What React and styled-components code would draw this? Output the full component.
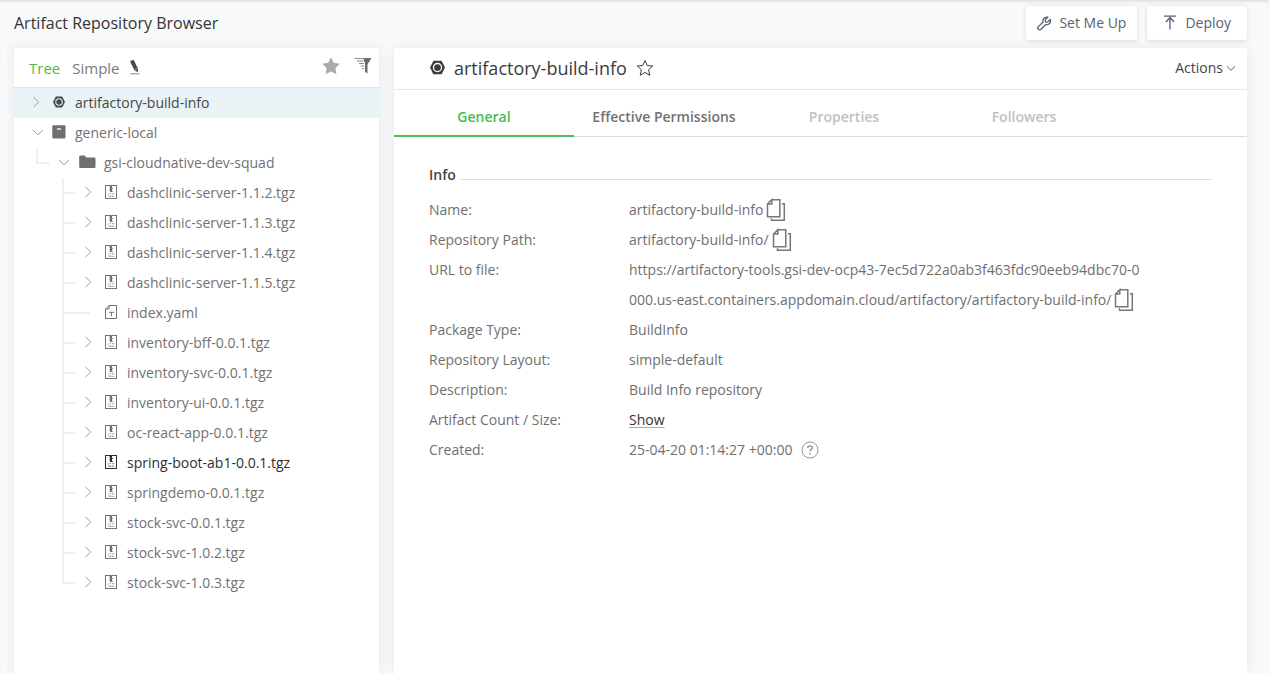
import React from "react";
import styled, { createGlobalStyle } from "styled-components";

const GlobalStyle = createGlobalStyle`
  *, *::before, *::after { box-sizing: border-box; }
  body {
    margin: 0;
    background: #f8f9fb;
    color: #6f6f6f;
    font: 14px/20px "Open Sans", "Noto Sans", sans-serif;
  }
  button {
    padding: 0;
    border: 0;
    background: none;
    color: inherit;
    font: inherit;
    cursor: pointer;
  }
  a { color: inherit; text-decoration: none; }
  h1, h2, h3, ul, dl, dd { margin: 0; padding: 0; font-weight: 400; }
  ul { list-style: none; }
  svg { display: block; flex: none; }
`;

const Page = styled.div`
  display: flex;
  flex-direction: column;
  min-height: 100vh;
  padding: 0 22px 0 14px;
  border-top: 1px solid #dfe1e3;
  box-shadow: inset 0 2px 2px #eceef0;
`;

const TopBar = styled.header`
  display: flex;
  align-items: center;
  justify-content: space-between;
  height: 47px;
  padding-bottom: 3px;
`;

const PageTitle = styled.h1`
  color: #333;
  font-size: 16px;
  line-height: 24px;
`;

const ButtonGroup = styled.div`
  display: flex;
  gap: 10px;
`;

const TopButton = styled.button`
  display: flex;
  align-items: center;
  gap: 8px;
  height: 34px;
  padding: 0 ${(p) => (p.$wide ? 16 : 11)}px;
  border-radius: 3px;
  background: #fff;
  box-shadow: 0 1px 5px rgba(0, 0, 0, 0.12);
  color: #556274;
`;

const Columns = styled.main`
  display: grid;
  grid-template-columns: 365px minmax(0, 1fr);
  gap: 15px;
  flex: 1;
`;

const Panel = styled.section`
  min-width: 0;
  border-radius: 3px 3px 0 0;
  background: #fff;
  box-shadow: 0 0 12px rgba(40, 60, 80, 0.09);
`;

const BrowserHeader = styled.div`
  display: flex;
  align-items: center;
  gap: 12px;
  height: 40px;
  padding: 0 7px 0 15px;
  border-bottom: 1px solid #e1e4e5;
`;

const ModeButton = styled.button`
  color: ${(p) => (p.$active ? "#43bd4b" : "#7a7a7a")};
  font-size: 15px;
`;

const ModeGroup = styled.div`
  display: flex;
  align-items: center;
  gap: 10px;
`;

const Tools = styled.div`
  display: flex;
  align-items: center;
  gap: 14px;
  margin-left: auto;
  padding-bottom: 4px;
`;

const TreeRow = styled.li`
  display: flex;
  align-items: center;
  height: 30px;
  padding-left: ${(p) => p.$indent}px;
  background: ${(p) => (p.$selected ? "#e9f2f5" : "transparent")};
  color: ${(p) => (p.$selected ? "#44494c" : p.$strong ? "#2f2f2f" : "#727272")};
`;

const Guide = styled.span`
  display: flex;
  flex-direction: column;
  flex: none;
  width: ${(p) => (p.$long ? 28 : 14)}px;
  height: 30px;
`;

const GuideTop = styled.span`
  height: 16px;
  border-left: 2px solid #f1f1f1;
  border-bottom: 2px solid #f1f1f1;
`;

const GuideBottom = styled.span`
  flex: 1;
  border-left: 2px solid #f1f1f1;
`;

const Toggle = styled.button`
  display: flex;
  justify-content: center;
  flex: none;
  width: ${(p) => (p.$wide ? 28 : 24)}px;
  padding-bottom: 2px;
  color: #9c9c9c;
`;

const FileIcon = styled.span`
  display: flex;
  justify-content: center;
  flex: none;
  width: ${(p) => p.$width}px;
  margin: 0 ${(p) => p.$gap}px 2px ${(p) => p.$before || 0}px;
`;

const DetailHeader = styled.div`
  display: flex;
  align-items: center;
  gap: 9px;
  height: 42px;
  padding: 0 11px 2px 36px;
  border-bottom: 1px solid #e8e8e8;
  color: #3c3c3c;
`;

const DetailTitle = styled.h2`
  font-size: 18px;
  line-height: 24px;
`;

const ActionsButton = styled.button`
  display: flex;
  align-items: center;
  gap: 3px;
  margin-left: auto;
  color: #444;
`;

const TabList = styled.div`
  display: flex;
  height: 47px;
  border-bottom: 1px solid #dcdcdc;
`;

const Tab = styled.button`
  width: 180px;
  height: 47px;
  padding-top: 8px;
  border-bottom: 2px solid ${(p) => (p.$active ? "#4abb50" : "transparent")};
  color: ${(p) => (p.$active ? "#43bd4b" : "#727272")};
  font-weight: 600;

  &:disabled { color: #bfbfbf; cursor: default; }
`;

const Details = styled.div`
  padding: 28px 36px 0 35px;
`;

const SectionTitle = styled.h3`
  display: flex;
  align-items: flex-end;
  gap: 5px;
  height: 20px;
  margin-bottom: 10px;
  color: #444;
  font-size: 14px;
  font-weight: 600;

  &::after {
    content: "";
    flex: 1;
    margin-bottom: 5px;
    border-bottom: 1px solid #dcdcdc;
  }
`;

const InfoRow = styled.div`
  display: grid;
  grid-template-columns: 200px minmax(0, 514px);
  line-height: 30px;
`;

const InfoValue = styled.dd`
  min-height: 30px;
  word-break: break-all;
`;

const CopyButton = styled.button`
  height: 24px;
  margin: 0 0 2px 3px;
  vertical-align: middle;
`;

const HelpButton = styled.button`
  height: 18px;
  margin: 0 0 2px 9px;
  vertical-align: middle;
`;

const ShowLink = styled.a`
  color: #333;
  text-decoration: underline #aaa 1px;
  text-decoration-skip-ink: none;
  text-underline-offset: 2px;
`;

const Chevron = ({ open, size = 12 }) => (
  <svg width={size} height="12" viewBox="0 0 12 12" fill="none" stroke="currentColor">
    <path d={open ? "M1 4 6 8.8 11 4" : "M3.5 1 8.7 6 3.5 11"} />
  </svg>
);

const BuildIcon = ({ size }) => (
  <svg width={size} height={size} viewBox="0 0 16 16" fill="currentColor">
    <path fillRule="evenodd" d="M4.3.7h7.4a1 1 0 0 1 .9.5L16 8l-3.4 6.8a1 1 0 0 1-.9.5H4.3a1 1 0 0 1-.9-.5L0 8l3.4-6.8a1 1 0 0 1 .9-.5ZM8 3a5 5 0 1 0 0 10A5 5 0 0 0 8 3Z" />
    <circle cx="8" cy="8" r="3.6" />
  </svg>
);

const BoxIcon = () => (
  <svg width="14" height="14" viewBox="0 0 14 14">
    <rect x=".3" y=".3" width="13.2" height="13.2" rx="1" fill="#6f6f6f" />
    <path d="M5 4h4" stroke="#fff" strokeWidth="1.3" />
  </svg>
);

const FolderIcon = () => (
  <svg width="17" height="14" viewBox="0 0 17 14" fill="#6f6f6f">
    <path d="M1.3.6h4.4l1.7 1.8h7.9q1.2 0 1.2 1.2v8.3q0 1.1-1.2 1.1h-14Q.2 13 .2 11.9V1.7Q.2.6 1.3.6Z" />
  </svg>
);

const ArchiveIcon = () => (
  <svg width="12" height="14" viewBox="0 0 12 14" fill="none" stroke="currentColor">
    <rect x=".5" y=".5" width="11" height="13" />
    <path d="M6 1v5.8" strokeWidth="2" />
    <path d="M4.2 2h2.5M5.5 3.4h2.4M4.2 4.8h2.5M5 6.4h2.8" strokeWidth="1" />
    <text x="6" y="11.8" textAnchor="middle" fontSize="5" fill="currentColor" stroke="none" opacity="0.8">GZ</text>
  </svg>
);

const TextFileIcon = () => (
  <svg width="12" height="14" viewBox="0 0 12 14" fill="none" stroke="currentColor">
    <path d="M4 .5h7.5v13H.5V4L4 .5V4H.5" />
    <path d="M4 7.3h5M6.5 7.3v4" />
  </svg>
);

const CopyIcon = () => (
  <svg width="20" height="24" viewBox="0 0 20 24" fill="none" stroke="#777" strokeWidth="1.5">
    <path d="M5.8 1.7h8v17H1.5V6l4.3-4.3V6H1.5" />
    <path d="M16 5.7h2.3v16.6H5.5v-2" />
  </svg>
);

const StarIcon = ({ filled }) =>
  filled ? (
    <svg width="18" height="18" viewBox="0 0 18 18" fill="#aaa">
      <path d="m9 .3 2.7 5.5 6.1.9-4.4 4.3 1 6.3L9 14.4l-5.4 2.9 1-6.3L.2 6.7l6.1-.9Z" />
    </svg>
  ) : (
    <svg width="18" height="18" viewBox="0 0 18 18" fill="none" stroke="currentColor">
      <path d="m9 1.5 2.2 5 5.6.5-4.2 3.7 1.2 5.6L9 13.4l-4.8 2.9 1.2-5.6L1.2 7l5.6-.5Z" />
    </svg>
  );

const FilterIcon = () => (
  <svg width="18" height="18" viewBox="0 0 18 18">
    <path d="M10.5 1H17.5L13.5 7.5V16.5L11 14.8V6L9.5 3Z" fill="#6c6c6c" />
    <path d="M.5 1.5h10M2.7 4h6.5M5 6.5h5M6.5 9h3.5M8 11.5h2" stroke="#8a8a8a" />
  </svg>
);

const PencilIcon = () => (
  <svg width="10" height="15" viewBox="0 0 10 15">
    <path d="m.9.8 2-.7q.7-.2 1.1.4l3.8 7.7.1 4.1-3.5-2.1L.4 2Q.1 1.1.9.8Z" fill="#414857" />
    <path d="m4.8 9.8 2-1.2" stroke="#fff" strokeWidth=".6" />
    <path d="M.3 13.8h9" stroke="#777f8c" />
  </svg>
);

const WrenchIcon = () => (
  <svg width="14" height="15" viewBox="0 0 14 15" fill="none" stroke="currentColor" strokeWidth="1.3" strokeLinejoin="round">
    <path d="M10.8 1.2 8.2 3.8l.3 2 2 .3 2.7-2.6q.9 3.1-1.3 4.5-1.5 1-3.2.5l-4.9 5Q2.5 14.4 1.3 13.3q-1.2-1.1-.2-2.4l5-4.9q-.5-1.7.6-3.4 1.5-2 4.1-1.4Z" />
  </svg>
);

const UploadIcon = () => (
  <svg width="14" height="16" viewBox="0 0 14 16" fill="none" stroke="currentColor" strokeWidth="1.3">
    <path d="M1 1.2h12M7 14.5V2.5M3 7 7 2.5 11 7" />
  </svg>
);

const HelpIcon = () => (
  <svg width="18" height="18" viewBox="0 0 18 18" fill="none" stroke="#999">
    <circle cx="9" cy="9" r="8" />
    <path d="M6.7 7q.1-2 2.3-2t2.3 1.8c0 1.7-2.3 1.5-2.3 3.6M9 12v1.5" strokeWidth="1.5" />
  </svg>
);

const files = [
  "dashclinic-server-1.1.2.tgz",
  "dashclinic-server-1.1.3.tgz",
  "dashclinic-server-1.1.4.tgz",
  "dashclinic-server-1.1.5.tgz",
  "index.yaml",
  "inventory-bff-0.0.1.tgz",
  "inventory-svc-0.0.1.tgz",
  "inventory-ui-0.0.1.tgz",
  "oc-react-app-0.0.1.tgz",
  "spring-boot-ab1-0.0.1.tgz",
  "springdemo-0.0.1.tgz",
  "stock-svc-0.0.1.tgz",
  "stock-svc-1.0.2.tgz",
  "stock-svc-1.0.3.tgz",
];

const TreeGuide = ({ last, long }) => (
  <Guide $long={long}>
    <GuideTop />
    {!last && <GuideBottom />}
  </Guide>
);

const FileRow = ({ name, last }) => {
  const archive = name.endsWith(".tgz");
  return (
    <TreeRow $indent={48} $strong={name.startsWith("spring-boot")}>
      <TreeGuide last={last} long={!archive} />
      {archive && (
        <Toggle aria-label={`Expand ${name}`}>
          <Chevron />
        </Toggle>
      )}
      <FileIcon $width={12} $gap={10} $before={archive ? 5 : 15}>
        {archive ? <ArchiveIcon /> : <TextFileIcon />}
      </FileIcon>
      <a href={`#${name}`}>{name}</a>
    </TreeRow>
  );
};

const Copy = ({ label }) => (
  <CopyButton aria-label={`Copy ${label}`}>
    <CopyIcon />
  </CopyButton>
);

const info = [
  ["Name:", <>artifactory-build-info<Copy label="name" /></>],
  ["Repository Path:", <>artifactory-build-info/<Copy label="repository path" /></>],
  [
    "URL to file:",
    <>
      https://artifactory-tools.gsi-dev-ocp43-7ec5d722a0ab3f463fdc90eeb94dbc70-0000.us-east.containers.appdomain.cloud/artifactory/artifactory-build-info/
      <Copy label="URL" />
    </>,
  ],
  ["Package Type:", "BuildInfo"],
  ["Repository Layout:", "simple-default"],
  ["Description:", "Build Info repository"],
  ["Artifact Count / Size:", <ShowLink href="#show">Show</ShowLink>],
  [
    "Created:",
    <>
      25-04-20 01:14:27 +00:00
      <HelpButton aria-label="About the creation time">
        <HelpIcon />
      </HelpButton>
    </>,
  ],
];

export default function App() {
  return (
    <>
      <GlobalStyle />
      <Page>
        <TopBar>
          <PageTitle>Artifact Repository Browser</PageTitle>
          <ButtonGroup>
            <TopButton><WrenchIcon />Set Me Up</TopButton>
            <TopButton $wide><UploadIcon />Deploy</TopButton>
          </ButtonGroup>
        </TopBar>
        <Columns>
          <Panel aria-label="Repositories">
            <BrowserHeader>
              <ModeButton $active>Tree</ModeButton>
              <ModeGroup>
                <ModeButton>Simple</ModeButton>
                <button aria-label="Edit"><PencilIcon /></button>
              </ModeGroup>
              <Tools>
                <button aria-label="Favorites"><StarIcon filled /></button>
                <button aria-label="Filter"><FilterIcon /></button>
              </Tools>
            </BrowserHeader>
            <ul>
              <TreeRow $indent={10} $selected>
                <Toggle aria-label="Expand artifactory-build-info"><Chevron /></Toggle>
                <FileIcon $width={14} $gap={9} $before={4}><BuildIcon size={12} /></FileIcon>
                <a href="#artifactory-build-info">artifactory-build-info</a>
              </TreeRow>
              <TreeRow $indent={12}>
                <Toggle aria-label="Collapse generic-local"><Chevron open /></Toggle>
                <FileIcon $width={14} $gap={9} $before={2}><BoxIcon /></FileIcon>
                <a href="#generic-local">generic-local</a>
              </TreeRow>
              <TreeRow $indent={22}>
                <TreeGuide last />
                <Toggle $wide aria-label="Collapse gsi-cloudnative-dev-squad"><Chevron open /></Toggle>
                <FileIcon $width={17} $gap={8} $before={1}><FolderIcon /></FileIcon>
                <a href="#gsi-cloudnative-dev-squad">gsi-cloudnative-dev-squad</a>
              </TreeRow>
              {files.map((name, i) => (
                <FileRow key={name} name={name} last={i === files.length - 1} />
              ))}
            </ul>
          </Panel>
          <Panel aria-label="Repository details">
            <DetailHeader>
              <BuildIcon size={15} />
              <DetailTitle>artifactory-build-info</DetailTitle>
              <button aria-label="Add to favorites"><StarIcon /></button>
              <ActionsButton>Actions<Chevron open size={10} /></ActionsButton>
            </DetailHeader>
            <TabList role="tablist">
              <Tab role="tab" aria-selected="true" $active>General</Tab>
              <Tab role="tab">Effective Permissions</Tab>
              <Tab role="tab" disabled>Properties</Tab>
              <Tab role="tab" disabled>Followers</Tab>
            </TabList>
            <Details>
              <SectionTitle>Info</SectionTitle>
              <dl>
                {info.map(([label, value]) => (
                  <InfoRow key={label}>
                    <dt>{label}</dt>
                    <InfoValue>{value}</InfoValue>
                  </InfoRow>
                ))}
              </dl>
            </Details>
          </Panel>
        </Columns>
      </Page>
    </>
  );
}
